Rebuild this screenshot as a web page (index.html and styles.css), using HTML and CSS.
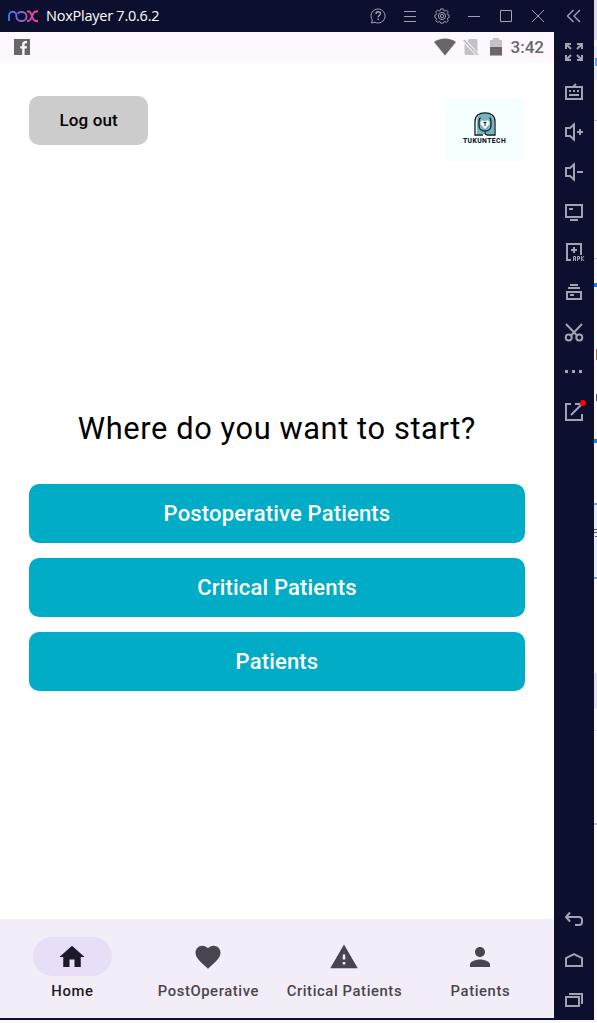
FILE: index.html
```html
<!DOCTYPE html>
<html lang="en">
<head>
<meta charset="utf-8">
<title>NoxPlayer 7.0.6.2</title>
<link rel="stylesheet" href="styles.css">
</head>
<body>
<div class="desktop">
  <div class="window">
    <header class="titlebar">
      <svg class="nox" width="31" height="12" viewBox="0 0 31 12"><defs><linearGradient id="nox" gradientUnits="userSpaceOnUse" x1="0" y1="0" x2="31" y2="0"><stop offset="0" stop-color="#3d73f5"/><stop offset=".5" stop-color="#9860cc"/><stop offset=".75" stop-color="#e8489c"/><stop offset="1" stop-color="#ff438c"/></linearGradient></defs><path d="M1 11V5.500A3.700 3.700 0 0 1 8.400 5.500V6.500a4.500 4.500 0 0 0 4.500 4.500h1.200a4.500 4.500 0 0 0 0-9h-1.200a4.500 4.500 0 0 0-3.400 1.600M19 1.500h1.500c4 0 3 9.500 7.500 9.500H30M30 1.500h-2c-4.500 0-3.500 9.500-8 9.500h-1" fill="none" stroke="url(#nox)" stroke-width="1.900"/></svg>
      <span class="app-name">NoxPlayer 7.0.6.2</span>
      <div class="window-tools">
        <svg viewBox="0 0 20 20"><path d="M3.500 17l.8-3A7 7 0 1 1 7 16.300L3.500 17z"/><path d="M8 8c0-3 4.500-3 4.500-.4 0 1.700-2.300 1.600-2.300 3.700" stroke-width="1.400"/><path d="M9.500 12.500h1.500V14H9.500z" class="solid"/></svg>
        <svg viewBox="0 0 20 20"><path d="M4 5.500h12M4 10.500h12M4 15.500h12"/></svg>
        <svg viewBox="0 0 20 20"><path d="M8.700 3.300h2.600l.5 1.700 1.200.5 1.600-.9 1.800 1.800-.9 1.600.5 1.200 1.300.5v2.600l-1.300.5-.5 1.200.9 1.400-1.800 1.800-1.600-.9-1.200.5-.5 1.200H8.700L8.200 16.800 7 16.300l-1.600.9-1.800-1.800.9-1.400-.5-1.200-1.300-.5V9.700L4 9.200 4.500 8l-.9-1.600 1.800-1.800 1.600.9L8.200 5z" transform="translate(.3 -.3) scale(.97)"/><circle cx="10" cy="10" r="3.600"/><circle cx="10" cy="10" r="1.700"/></svg>
        <svg viewBox="0 0 20 20"><path d="M4 10.500h12"/></svg>
        <svg viewBox="0 0 20 20"><path d="M4.500 4.500h11v11h-11z"/></svg>
        <svg viewBox="0 0 20 20"><path d="M4 4l12 12M16 4L4 16"/></svg>
      </div>
    </header>
    <div class="statusbar">
      <svg class="facebook" width="16" height="16" viewBox="0 0 16 16"><path fill="#6a656b" d="M0 0h16v16H0z"/><path fill="#fef7ff" d="M8.200 16V9.500H6.300V7.200h1.900V5.500C8.200 3.200 9.500 2 11.500 2H13v2.300h-1.200c-.9 0-1.200.4-1.200 1.200v1.700H13l-.4 2.300h-2V16z"/></svg>
      <div class="signals">
        <svg class="wifi" width="22" height="18" viewBox="0 0 22 18"><path fill="#6a656b" d="M0 4C6-.8 16-.8 22 4L11 17.500z"/></svg>
        <svg width="16" height="18" viewBox="0 0 16 18"><path fill="#c6c0c8" d="M6 1h7q1.500 0 1.500 1.500v12L4.300 3zM1.500 5.500L12.500 17H3q-1.500 0-1.500-1.500z"/><path d="M.8 2l14 15" stroke="#bdb7bf" stroke-width="1.600"/></svg>
        <svg class="battery" width="12" height="18" viewBox="0 0 12 18"><path fill="#c6c0c8" d="M0 2h3V0h6v2h3v8H0z"/><path fill="#6a656b" d="M0 9h12v8.500H0z"/></svg>
        <span class="clock">3:42</span>
      </div>
    </div>
    <main class="screen">
      <div class="top">
        <button class="logout">Log out</button>
        <div class="brand">
          <svg width="24" height="25" viewBox="0 0 24 25"><path d="M4 22V9C4 4 7 1 12 1s9 3 9 8v13z" fill="#75b5c2"/><path d="M10 23H2V9.500C2 4 6 .8 12 .8s10 3.200 10 8.700V23h-8" fill="none" stroke="#10181c" stroke-width="1.300"/><path d="M7.500 5.500C6 6.500 6 8 6 10v4c0 3 2.500 5 6 5s6-2 6-5v-4c0-2 0-3.500-1.500-4.500M12 19v1.500c0 1.500.8 2.200 2 2.500" fill="none" stroke="#10181c" stroke-width="1.200"/><path d="M12 17l-4-4.200c-2-3 1.700-5.800 4-3.300 2.300-2.500 6 .3 4 3.300z" fill="#fff"/><path d="M10.500 10.500h3M12 10.500v3.500" stroke="#10181c" stroke-width="1"/></svg>
          <span class="brand-name">TUKUNTECH</span>
        </div>
      </div>
      <h1 class="question">Where do you want to start?</h1>
      <div class="choices">
        <button class="choice">Postoperative Patients</button>
        <button class="choice">Critical Patients</button>
        <button class="choice">Patients</button>
      </div>
    </main>
    <nav class="tabs">
      <a class="tab active"><span class="pill"><svg viewBox="0 0 24 24"><path d="M10 20v-6h4v6h5v-8h3L12 3 2 12h3v8z"/></svg></span>Home</a>
      <a class="tab"><span class="pill"><svg viewBox="0 0 24 24"><path d="M12 21.350l-1.450-1.320C5.400 15.360 2 12.280 2 8.500 2 5.420 4.420 3 7.500 3c1.740 0 3.410.81 4.500 2.090C13.090 3.810 14.760 3 16.500 3 19.580 3 22 5.420 22 8.500c0 3.780-3.400 6.860-8.550 11.540z"/></svg></span>PostOperative</a>
      <a class="tab"><span class="pill"><svg viewBox="0 0 24 24"><path d="M1 21h22L12 2 1 21zm12-3h-2v-2h2v2zm0-4h-2v-4h2v4z"/></svg></span>Critical Patients</a>
      <a class="tab"><span class="pill"><svg viewBox="0 0 24 24"><path d="M12 12c2.210 0 4-1.790 4-4s-1.790-4-4-4-4 1.790-4 4 1.790 4 4 4zm0 2c-2.670 0-8 1.340-8 4v2h16v-2c0-2.660-5.330-4-8-4z"/></svg></span>Patients</a>
    </nav>
  </div>
  <aside class="sidebar">
    <svg class="collapse" viewBox="0 0 20 20"><path d="M9.500 4L3.500 10l6 6M16 4l-6 6 6 6" stroke-width="1.400"/></svg>
    <svg viewBox="0 0 20 20"><path d="M2 7V2h5M2.500 2.500L7 7M13 2h5v5M17.500 2.500L13 7M2 13v5h5M2.500 17.500L7 13M18 13v5h-5M17.500 17.500L13 13"/></svg>
    <svg viewBox="0 0 20 20"><path d="M2 5h16v12H2zM9 5l3-3M5 9h2M9 9h2M13 9h2M5 13h10"/></svg>
    <svg viewBox="0 0 20 20"><path d="M10 2.500v15L6 14H2V6h4zM13 10h6M16 7v6"/></svg>
    <svg viewBox="0 0 20 20"><path d="M10 2.500v15L6 14H2V6h4zM13 10h6"/></svg>
    <svg viewBox="0 0 20 20"><path d="M2 3h16v12H2zM5 7h4M6 18h8"/></svg>
    <svg viewBox="0 0 20 20"><path d="M7 18H3V2h14v11M10 5v6M7 8h6"/><path d="M9.500 19v-4.500h2V19M9.500 17h2M13.500 19v-4.500h2V17h-2M17.500 14v5M20 14l-2 2.500 2 2.500" stroke-width="1"/></svg>
    <svg viewBox="0 0 20 20"><path d="M3 10h14v7H3zM4 6h12M6 3h8M6 13h4"/></svg>
    <svg viewBox="0 0 20 20"><path d="M2 2l11.500 12M18 2L6.500 14"/><circle cx="4.700" cy="15.500" r="3"/><circle cx="15.300" cy="15.500" r="3"/></svg>
    <svg viewBox="0 0 20 20"><path class="solid" d="M1 8h3v3H1zM8 8h3v3H8zM15 8h3v3h-3z"/></svg>
    <svg viewBox="0 0 20 20"><path d="M7 2H2v16h16v-6M11 2h5M7 13L17 3"/><circle class="alert" cx="19" cy="1" r="3"/></svg>
    <svg class="back" viewBox="0 0 20 20"><path d="M6 2.500L2 7 6 11.500M2.500 7H15q3 0 3 3v2q0 3-3 3h-4"/></svg>
    <svg viewBox="0 0 20 20"><path d="M2 16V8l8-4 8 4v8z"/></svg>
    <svg viewBox="0 0 20 20"><path d="M2 7h13v9H2zM5 4h13v10"/></svg>
  </aside>
  <div class="backdrop">
    <svg width="3" height="1020" viewBox="0 0 3 1020"><path fill="#dcdce8" d="M0 0h3v40H0z"/><path fill="#e9eefb" d="M0 46h3v34H0zM0 504h3v74H0z"/><path fill="#69a8ef" d="M1 58h2v8H1zM0 503h3v2H0zM0 577h3v2H0z"/><path fill="#c7c9dc" d="M0 120h3v1H0zM0 258h3v1H0z"/><path fill="#078bff" d="M0 283h3v4H0zM0 439h3v4H0z"/><path fill="#b87324" d="M2 349h1v11H2z"/><path fill="#555" d="M2 394h1v7H2zM0 529h3v1H0zM0 532h3v1H0zM1 536h2v1H1z"/><path fill="#e4e4e6" d="M0 673h3v36H0zM0 730h3v1H0z"/><path fill="#c5c5c8" d="M0 823h3v2H0z"/></svg>
  </div>
</div>
</body>
</html>
```

FILE: styles.css
```css
* { box-sizing: border-box; }
body { margin: 0; background: #fafafa; font-family: Roboto, sans-serif; }
button { border: 0; padding: 0; font-family: inherit; }
svg { display: block; }
.desktop { display: grid; grid-template-columns: 554px 40px 3px; grid-template-rows: 1020px; height: 1020px; overflow: hidden; }
.window { display: flex; flex-direction: column; background: #fff; border-bottom: 2px solid #0d0f2f; min-width: 0; }
.titlebar { display: flex; align-items: center; height: 32px; padding: 0 6px 0 8px; background: #0d0f2f; }
.nox { flex: none; margin-right: 7px; }
.app-name { color: #fff; font: 14.500px/20px "Open Sans", sans-serif; letter-spacing: -0.240px; white-space: nowrap; }
.window-tools { display: flex; gap: 12px; margin-left: auto; }
.window-tools svg, .sidebar svg { flex: none; width: 20px; height: 20px; fill: none; stroke: #a2a3b2; stroke-width: 1; overflow: visible; }
svg .solid { fill: #a2a3b2; stroke: none; }
.statusbar { display: flex; align-items: center; justify-content: space-between; height: 30px; padding: 0 10px 0 14px; background: #fef7ff; }
.signals { display: flex; align-items: center; }
.wifi { margin-right: 7px; }
.battery { margin: 0 9px 0 11px; }
.clock { color: #6a656b; font-size: 17px; font-weight: 500; line-height: 30px; }
.screen { flex: 1; padding: 34px 29.500px 0 29.400px; }
.top { display: flex; justify-content: space-between; align-items: flex-start; height: 65px; }
.logout { width: 118.500px; height: 49.300px; border-radius: 10px; background: #ccc; color: #000; font-size: 17px; font-weight: 500; line-height: 48px; padding-bottom: 1px; letter-spacing: 0.120px; }
.brand { display: flex; flex-direction: column; align-items: center; width: 78px; height: 62px; margin: 3px 1px 0 0; padding-top: 13px; background: #f5ffff; }
.brand-name { font-size: 6.800px; line-height: 8px; font-weight: 800; letter-spacing: 0.400px; color: #10181c; }
.question { margin: 248px 0 0; text-align: center; font-size: 30.800px; line-height: 40px; font-weight: 400; letter-spacing: 0.600px; color: #000; white-space: nowrap; }
.choices { display: flex; flex-direction: column; gap: 15px; margin-top: 35px; }
.choice { height: 59px; border-radius: 10px; background: #00acc6; color: #fff; font-size: 22px; font-weight: 500; line-height: 58px; padding-top: 1px; letter-spacing: 0.170px; }
.tabs { display: grid; grid-template-columns: 126px 126px 126px 126px; gap: 10px; height: 99px; padding: 18px 0 0 9.400px; background: #f3edf7; }
.tab { display: flex; flex-direction: column; align-items: center; color: #49454f; font-size: 14.800px; font-weight: 500; line-height: 20px; letter-spacing: 0.600px; white-space: nowrap; }
.pill { display: flex; align-items: center; justify-content: center; width: 79px; height: 39px; margin-bottom: 5px; border-radius: 20px; }
.pill svg { width: 30px; height: 30px; fill: #49454f; }
.active { color: #1d1b20; }
.active .pill { background: #e8def8; }
.active svg { fill: #1d192b; }
.sidebar { display: flex; flex-direction: column; align-items: center; gap: 20px; padding: 6px 0 10px; background: #0d0f2f; }
.sidebar svg { stroke-width: 2; }
.sidebar .collapse { margin-bottom: -4px; }
.sidebar .back { margin-top: auto; }
.sidebar .alert { fill: #f00; stroke: none; }
.backdrop { background: #fafaff; }
```
